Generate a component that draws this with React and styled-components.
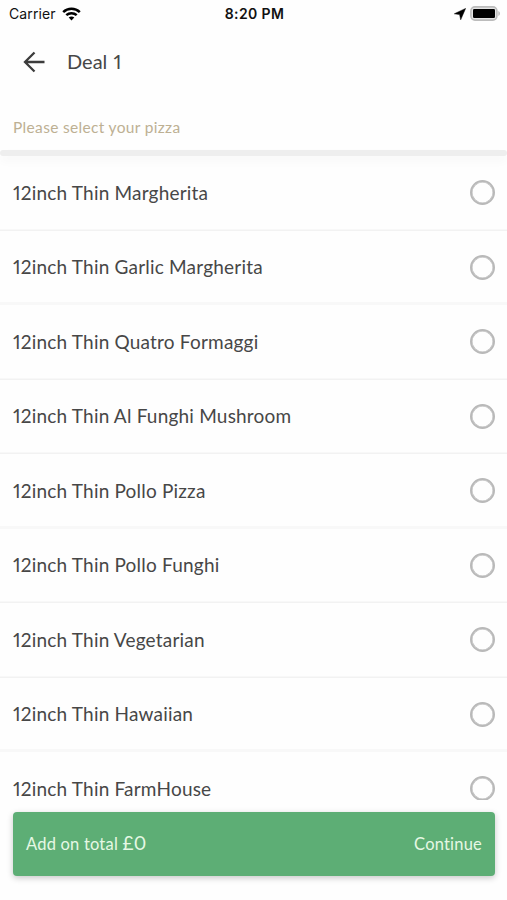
import React, { useState } from 'react';
import styled, { createGlobalStyle } from 'styled-components';

const GlobalStyle = createGlobalStyle`
  * {
    box-sizing: border-box;
  }

  body {
    margin: 0;
    background: #fefefe;
  }
`;

const Screen = styled.div`
  width: 100%;
  height: 900px;
  display: flex;
  flex-direction: column;
  overflow: hidden;
  background: #fefefe;
  color: #474747;
  font-family: Lato, "Liberation Sans", sans-serif;
  font-feature-settings: "pnum" 1;
  font-variant-ligatures: none;
`;

const StatusBar = styled.div`
  height: 27px;
  flex: none;
  display: grid;
  grid-template-columns: 1fr auto 1fr;
  align-items: center;
  padding: 0 6px 0 9px;
  color: #111;
  font-family: Inter, "Liberation Sans", sans-serif;
  font-size: 14px;
`;

const Carrier = styled.div`
  display: flex;
  align-items: center;
  gap: 6px;
  letter-spacing: 0.1px;
`;

const Clock = styled.div`
  padding-right: 1px;
  font-weight: 600;
  font-size: 14px;
  letter-spacing: 0.4px;
`;

const StatusIcons = styled.div`
  display: flex;
  align-items: center;
  justify-content: flex-end;
  gap: 4px;
`;

const Header = styled.header`
  height: 69px;
  flex: none;
  display: flex;
  align-items: center;
  gap: 21px;
  padding-left: 22px;
`;

const BackButton = styled.button`
  display: flex;
  padding: 0;
  border: 0;
  background: none;
  color: #3c3c3c;
`;

const Title = styled.h1`
  margin: 0 0 1px;
  font-size: 20px;
  font-weight: 400;
  line-height: 26px;
  word-spacing: 1px;
`;

const Prompt = styled.div`
  height: 54px;
  flex: none;
  padding: 20px 13px 0;
  color: #bdb093;
  font-size: 15.5px;
  line-height: 22px;
  letter-spacing: 0.33px;
`;

const Divider = styled.div`
  height: 6px;
  flex: none;
  border-radius: 3px;
  background: #eee;
  box-shadow: 0 5px 10px rgba(0, 0, 0, 0.035);
`;

const List = styled.div`
  height: 644px;
  flex: none;
  overflow: hidden;
`;

const Row = styled.div`
  height: 74.5px;
  display: flex;
  align-items: center;
  justify-content: space-between;
  padding: 0 12px 1px 13px;
  box-shadow: inset 0 ${props => props.$soft ? '-3px #f8f8f8' : '-1.5px #f2f2f2'};
`;

const Name = styled.span`
  font-size: 19px;
  line-height: 26px;
  letter-spacing: 0.2px;
`;

const Radio = styled.span`
  width: 25px;
  height: 25px;
  border: 2px solid #b9b9b9;
  box-shadow: inset 0 0 0 0.5px #b9b9b9;
  border-radius: 50%;
  background: ${props => props.$checked ? '#5dae75' : 'none'};
`;

const Footer = styled.footer`
  padding: 12px 12px 24px 13px;
`;

const TotalBar = styled.div`
  height: 64px;
  display: flex;
  align-items: baseline;
  justify-content: space-between;
  padding: 0 13px;
  border-radius: 4px;
  background: #5dae75;
  box-shadow: 0 2px 6px rgba(0, 0, 0, 0.22);
  color: #e6f8e4;
  font-size: 16.5px;
  line-height: 62px;
  letter-spacing: 0.2px;
`;

const Price = styled.span`
  font-size: 19px;
`;

const pizzas = [
  '12inch Thin Margherita',
  '12inch Thin Garlic Margherita',
  '12inch Thin Quatro Formaggi',
  '12inch Thin Al Funghi Mushroom',
  '12inch Thin Pollo Pizza',
  '12inch Thin Pollo Funghi',
  '12inch Thin Vegetarian',
  '12inch Thin Hawaiian',
  '12inch Thin FarmHouse',
];

function WifiIcon() {
  return (
    <svg width="19" height="14" viewBox="0 0 19 14" fill="none" stroke="#000" strokeWidth="2.5">
      <path d="M1.2 5.1C5.8.6 13.2.6 17.8 5.1" />
      <path d="M4.3 8.2c2.9-2.7 7.5-2.7 10.4 0" />
      <path d="M6.7 10.6c1.6-1.4 4-1.4 5.6 0L9.5 13.5Z" fill="#000" stroke="none" />
    </svg>
  );
}

function LocationIcon() {
  return (
    <svg width="12" height="12" viewBox="0 0 12 12">
      <path d="M11.6.4 6.7 11.8 5.6 6.6.3 5.8Z" fill="#000" stroke="#000" strokeWidth=".5" strokeLinejoin="round" />
    </svg>
  );
}

function BatteryIcon() {
  return (
    <svg width="31" height="15" viewBox="0 0 31 15">
      <rect x=".9" y=".9" width="26" height="13.2" rx="4" fill="#e4e4e4" stroke="#bcbcbc" strokeWidth="1.6" />
      <rect x="3" y="3" width="22" height="9" rx="1.2" fill="#000" />
      <path d="M28.3 5c2.2.8 2.2 4.2 0 5Z" fill="#bcbcbc" />
    </svg>
  );
}

function BackIcon() {
  return (
    <svg width="24" height="22" viewBox="0 0 24 22" fill="none" stroke="currentColor" strokeWidth="2.3">
      <path d="M22.5 11H3M12.5 1.5 3 11l9.5 9.5" />
    </svg>
  );
}

const App = () => {
  const [selected, setSelected] = useState(null);

  return (
    <Screen>
      <GlobalStyle />
      <StatusBar>
        <Carrier>Carrier <WifiIcon /></Carrier>
        <Clock>8:20 PM</Clock>
        <StatusIcons>
          <LocationIcon />
          <BatteryIcon />
        </StatusIcons>
      </StatusBar>
      <Header>
        <BackButton><BackIcon /></BackButton>
        <Title>Deal 1</Title>
      </Header>
      <Prompt>Please select your pizza</Prompt>
      <Divider />
      <List>
        {pizzas.map((pizza, i) =>
          <Row key={pizza} $soft={i % 3 === 1} onClick={() => setSelected(pizza)}>
            <Name>{pizza}</Name>
            <Radio $checked={selected === pizza} />
          </Row>
        )}
      </List>
      <Footer>
        <TotalBar>
          <span>Add on total <Price>£0</Price></span>
          <span>Continue</span>
        </TotalBar>
      </Footer>
    </Screen>
  );
};

export default App;
